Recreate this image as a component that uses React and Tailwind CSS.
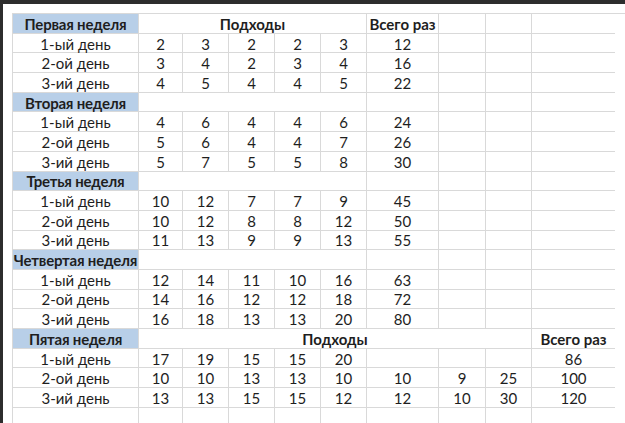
const weeks = [
  {
    title: 'Первая неделя',
    head: true,
    days: [
      [2, 3, 2, 2, 3, 12],
      [3, 4, 2, 3, 4, 16],
      [4, 5, 4, 4, 5, 22],
    ],
  },
  {
    title: 'Вторая неделя',
    days: [
      [4, 6, 4, 4, 6, 24],
      [5, 6, 4, 4, 7, 26],
      [5, 7, 5, 5, 8, 30],
    ],
  },
  {
    title: 'Третья неделя',
    days: [
      [10, 12, 7, 7, 9, 45],
      [10, 12, 8, 8, 12, 50],
      [11, 13, 9, 9, 13, 55],
    ],
  },
  {
    title: 'Четвертая неделя',
    days: [
      [12, 14, 11, 10, 16, 63],
      [14, 16, 12, 12, 18, 72],
      [16, 18, 13, 13, 20, 80],
    ],
  },
];

const lastWeek = [
  [17, 19, 15, 15, 20, '', '', '', 86],
  [10, 10, 13, 13, 10, 10, 9, 25, 100],
  [13, 13, 15, 15, 12, 12, 10, 30, 120],
];

const dayNames = ['1-ый день', '2-ой день', '3-ий день'];

const Cell = ({ children, className = '' }) => (
  <div
    className={`h-[19.7px] pt-[2px] flex items-center justify-center whitespace-nowrap border-b border-r border-[#d9d9d9] leading-none ${className}`}
  >
    {children}
  </div>
);

const Label = ({ children }) => (
  <Cell className="border-l">{children}</Cell>
);

const WeekTitle = ({ children }) => (
  <Cell className="border-l bg-[#b8cfe8] font-bold tracking-[-0.2px]">{children}</Cell>
);

export default function App() {
  return (
    <div className="w-[625px] h-[423px] overflow-hidden bg-white border-t-4 border-l-[3px] border-[#2d2d2d] pl-[9px] pt-[9px]">
      <div
        className="grid grid-cols-[127px_44px_46px_46px_46px_46px_72px_47px_46px_83px] border-t border-[#d9d9d9] text-[15px] text-[#1e1e1e]"
        style={{ fontFamily: 'Lato, "Open Sans", sans-serif' }}
      >
        {weeks.map((w) => (
          <div key={w.title} className="contents">
            <WeekTitle>{w.title}</WeekTitle>
            <Cell className="col-span-5 font-bold">{w.head ? 'Подходы' : ''}</Cell>
            <Cell className="font-bold">{w.head ? 'Всего раз' : ''}</Cell>
            <Cell />
            <Cell />
            <Cell className="border-r-0" />
            {w.days.map((d, i) => (
              <div key={i} className="contents">
                <Label>{dayNames[i]}</Label>
                {d.map((n, j) => (
                  <Cell key={j}>{n}</Cell>
                ))}
                <Cell />
                <Cell />
                <Cell className="border-r-0" />
              </div>
            ))}
          </div>
        ))}

        <WeekTitle>Пятая неделя</WeekTitle>
        <Cell className="col-span-8 font-bold">Подходы</Cell>
        <Cell className="border-r-0 font-bold">Всего раз</Cell>
        {lastWeek.map((d, i) => (
          <div key={i} className="contents">
            <Label>{dayNames[i]}</Label>
            {d.map((n, j) => (
              <Cell key={j} className={j === d.length - 1 ? 'border-r-0' : ''}>
                {n}
              </Cell>
            ))}
          </div>
        ))}

        <Label />
        {Array.from({ length: 9 }).map((_, j) => (
          <Cell key={j} className={j === 8 ? 'border-r-0' : ''} />
        ))}
      </div>
    </div>
  );
}
